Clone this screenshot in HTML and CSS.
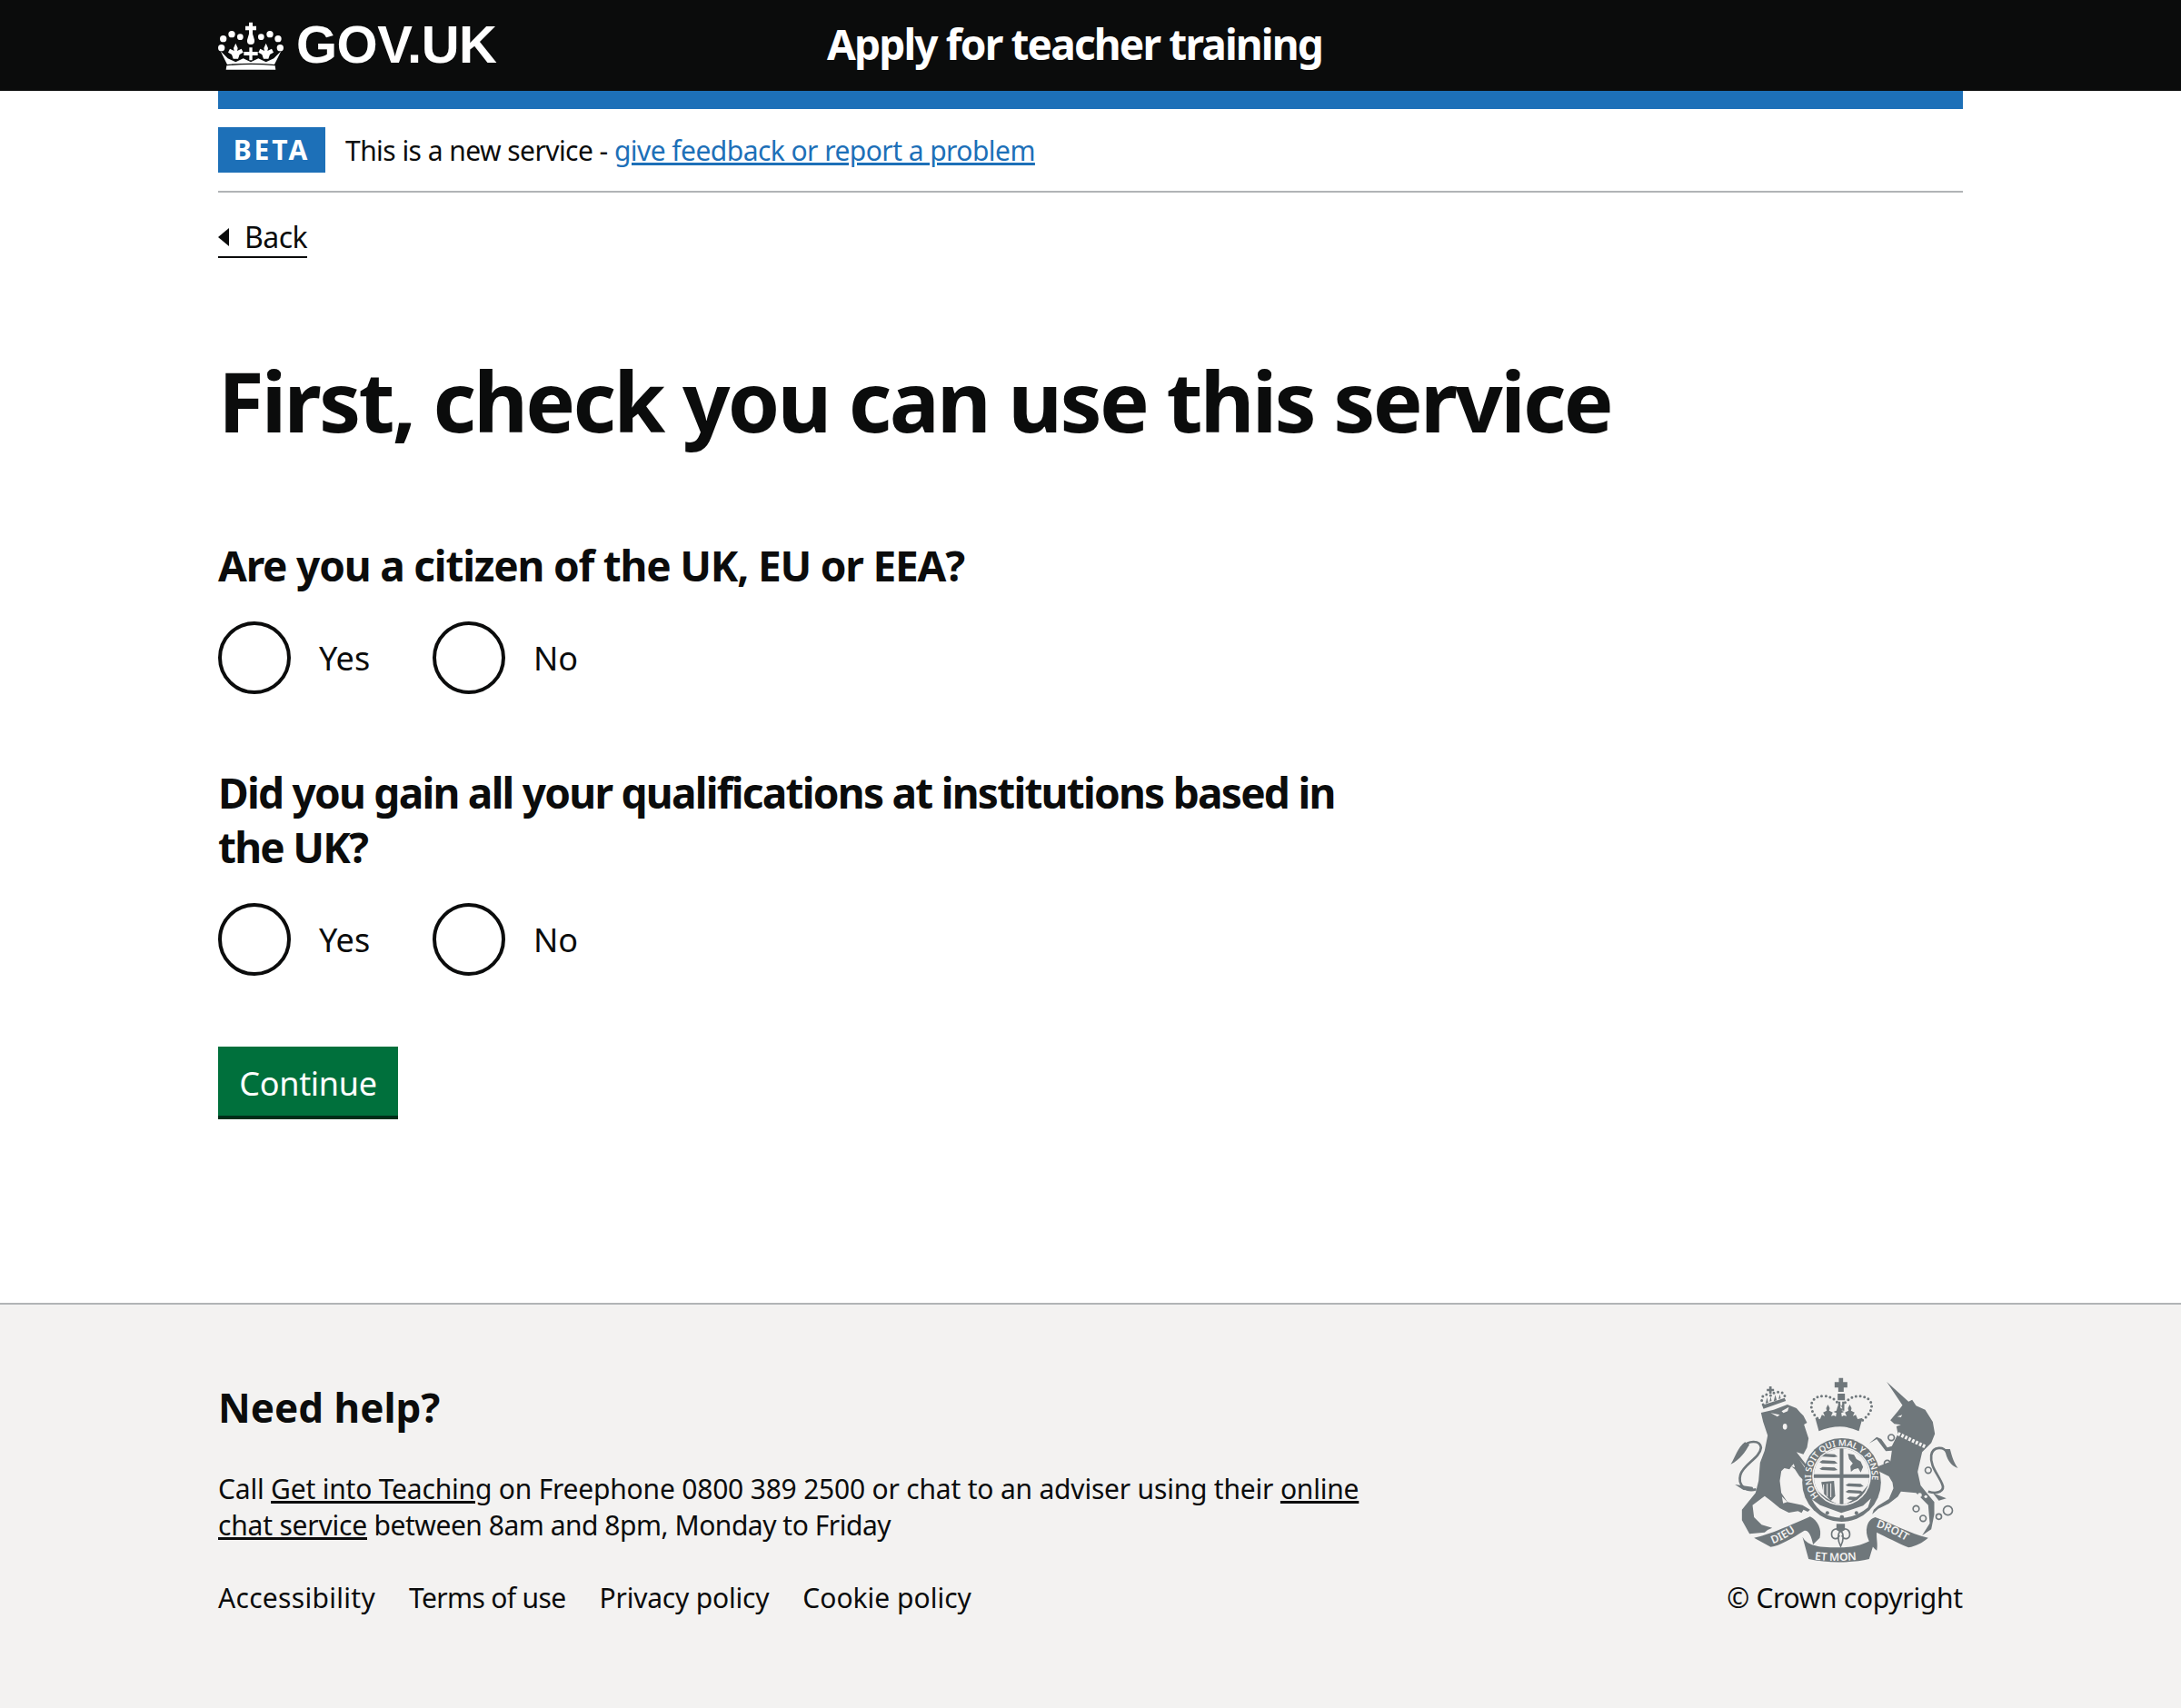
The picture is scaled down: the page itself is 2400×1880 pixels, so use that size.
FILE: index.html
```html
<!DOCTYPE html>
<html lang="en">

<head>
    <meta charset="UTF-8">
    <meta name="viewport" content="width=device-width, initial-scale=1.0">
    <title>Apply for teacher training</title>
    <link rel="stylesheet" href="styles.css">
</head>

<body>
    <header class="header">
        <div class="wrap header-inner">
            <a class="logo" href="#">
                <svg class="crown" viewBox="120 60 216 162" aria-hidden="true">
                    <g fill="#fff">
                        <path d="M222 65h12v12h12v14h-12v12l6 20q2 15-12 15t-12-15l6-20V91h-12V77h12z"/>
                        <circle cx="165" cy="104" r="11"/><circle cx="137" cy="119" r="11"/><circle cx="131" cy="149" r="11"/>
                        <circle cx="193" cy="113" r="10"/><circle cx="262" cy="113" r="10"/>
                        <circle cx="291" cy="104" r="11"/><circle cx="318" cy="119" r="11"/><circle cx="325" cy="149" r="11"/>
                        <path d="M128 160L150 204Q228 196 306 204L328 160 304 184 278 196 253 184 228 196 203 184 178 196 152 184Z"/>
                        <path d="M148 208Q228 200 308 208L310 221H146Z"/>
                        <path d="M178 134l7 16-2 9 14-7 6 12-12 7-5 14h-16l-5-14-12-7 6-12 14 7-2-9zM278 134l7 16-2 9 14-7 6 12-12 7-5 14h-16l-5-14-12-7 6-12 14 7-2-9z"/>
                        <path d="M223 148h10v14h18v12h-18v16h-10v-16h-18v-12h18z"/>
                    </g>
                </svg>
                <span class="logo-text">GOV.UK</span>
            </a>
            <a class="service-name" href="#">Apply for teacher training</a>
        </div>
    </header>

    <div class="wrap">
        <div class="blue-bar"></div>
        <div class="phase">
            <strong class="tag">BETA</strong>
            <span>This is a new service - <a class="link-blue" href="#">give feedback or report a problem</a></span>
        </div>
        <a class="back" href="#"><span class="back-arrow"></span>Back</a>

        <main class="main">
            <h1 class="title">First, check you can use this service</h1>
            <form>
                <fieldset class="question">
                    <legend class="q-label q-short">Are you a citizen of the UK, EU or EEA?</legend>
                    <div class="radios">
                        <label class="radio"><span class="radio-circle"></span><span class="radio-yes">Yes</span></label>
                        <label class="radio"><span class="radio-circle"></span>No</label>
                    </div>
                </fieldset>
                <fieldset class="question">
                    <legend class="q-label">Did you gain all your qualifications at institutions based in the UK?</legend>
                    <div class="radios">
                        <label class="radio"><span class="radio-circle"></span><span class="radio-yes">Yes</span></label>
                        <label class="radio"><span class="radio-circle"></span>No</label>
                    </div>
                </fieldset>
                <button class="button" type="button">Continue</button>
            </form>
        </main>
    </div>

    <footer class="footer">
        <div class="wrap footer-inner">
            <div class="footer-left">
                <h2 class="footer-title">Need help?</h2>
                <p class="footer-text">Call <a href="#">Get into Teaching</a> on Freephone 0800 389 2500 or chat to an adviser using their <a href="#">online</a> <a href="#">chat service</a> <span class="footer-tight">between 8am and 8pm, Monday to Friday</span></p>
                <ul class="footer-links">
                    <li><a href="#">Accessibility</a></li>
                    <li><a href="#">Terms of use</a></li>
                    <li><a href="#">Privacy policy</a></li>
                    <li><a href="#">Cookie policy</a></li>
                </ul>
            </div>
            <div class="footer-right">
                <svg class="arms" viewBox="60 75 770 630" aria-hidden="true">
                    <defs>
                        <path id="garter" d="M364 471A100 100 0 1 1 509 476"/>
                        <path id="scroll-l" d="M212 628Q270 606 318 562"/>
                        <path id="scroll-m" d="M350 680Q435 690 526 676"/>
                        <path id="scroll-r" d="M552 572Q612 592 672 632"/>
                        <clipPath id="shield-clip"><circle cx="439" cy="405" r="92"/></clipPath>
                    </defs>
                    <g class="arms-fill">
                        <g transform="translate(45 60)">
                            <!-- lion -->
                            <path d="M128 135L170 125 215 108 245 120 258 135 268 145 280 168 270 174 285 220 280 250 268 272 245 265 300 335 305 375 280 370 255 345 240 322 228 312 222 322 205 318 195 328 190 360 195 400 215 430 265 440 290 455 282 462 268 455 262 466 250 460 220 465 190 450 160 425 140 410 100 440 105 480 130 505 165 515 150 522 140 530 90 535 65 490 65 455 110 400 120 360 125 300 140 260 150 210 135 165Z"/>
                            <path class="arms-line" d="M112 388C80 398 50 375 60 340 70 305 125 285 128 250 125 225 85 225 72 248"/>
                            <path d="M28 305C45 280 50 250 75 232L90 240C75 265 60 290 28 305ZM42 372L100 380 105 392 70 390Z"/>
                            <path class="arms-light" d="M160 136l30 6-8 6zM196 130l24-14-4 14-14 6zM255 290l44 56-5 2zM228 312l8-8 4 12zM215 430l-18-18 4 22z"/>
                            <ellipse class="arms-light" cx="207" cy="181" rx="7" ry="10"/>
                            <!-- lion crown -->
                            <path d="M155 48h8v8h8v8h-8v8h-8v-8h-8v-8h8zM132 110l74-24 4 10-74 26z"/>
                            <path class="arms-dots" d="M135 108C120 80 145 68 160 78 170 62 212 60 206 88"/>
                            <path d="M148 84l4 18-9 2zM175 76l5 18-10 3zM160 82l3 14-7 2zM190 74l3 14-7 2z"/>
                        </g>
                        <g transform="translate(435 60)">
                            <!-- unicorn -->
                            <path d="M153 33L225 98 237 92 250 112 280 125 305 165 312 205 300 235 270 265 255 330 265 375 285 400 310 430 310 470 300 520 270 540 295 500 290 440 250 400 200 395 190 412 160 435 125 452 105 470 110 455 125 442 160 420 175 385 172 365 160 345 130 330 110 300 125 312 165 296 170 260 150 262 120 222 95 236 120 215 135 222 155 250 170 245 190 205 185 180 200 175 178 172 165 160 190 130 205 110Z"/>
                            <path class="arms-line" d="M290 395C320 405 348 395 335 368 322 338 295 310 300 275 305 245 345 245 352 268"/>
                            <path d="M388 318C365 310 350 290 345 255L362 255C370 285 375 300 388 318ZM305 400L350 418 325 425Z"/>
                            <path class="arms-collar" d="M190 204L282 248"/>
                            <path class="arms-light" d="M188 148l16-6-4 8z"/>
                            <g class="arms-ring">
                                <circle cx="168" cy="217" r="10"/><circle cx="155" cy="302" r="10"/><circle cx="290" cy="325" r="10"/>
                                <circle cx="250" cy="452" r="10"/><circle cx="273" cy="484" r="10"/><circle cx="325" cy="478" r="9"/><circle cx="355" cy="458" r="15"/>
                            </g>
                            <circle class="arms-light" cx="282" cy="372" r="7"/><circle class="arms-light" cx="262" cy="407" r="7"/><circle class="arms-light" cx="282" cy="412" r="5"/>
                        </g>
                        <!-- big crown -->
                        <path d="M430 80h14v14h14v18h-12v14h-18v-14h-12V94h14z"/>
                        <path d="M426 132h24v22h-24zM428 158h7v30h-7zM441 158h7v30h-7z"/>
                        <path class="arms-dots" d="M370 222C325 190 330 140 380 140 410 140 430 160 437 185 446 160 470 138 500 140 550 145 550 190 505 222"/>
                        <path d="M352 212l16 4 6-14 10 4-6-12 12-6-2-8 6-12 6 12-2 8 12 6-6 12 10-2 6 4 2-12-10-4 10-4 4-14h8l4 14 10 4-10 4 2 12 6-4 10 2-6-12 12-6-2-8 6-12 6 12-2 8 12 6-6 12 10-4 6 14 16-4-12 44Q438 226 364 256Z"/>
                        <path class="arms-light" d="M362 262Q438 232 510 262L500 284Q438 262 376 284Z"/>
                        <!-- garter -->
                        <circle cx="439" cy="405" r="126"/>
                        <circle cx="439" cy="425" r="130"/>
                        <circle class="arms-light" cx="439" cy="405" r="97"/>
                        <path class="arms-light" d="M340 480l28 20 70 26 72-24 26-24-10 30q-40 34-88 34-66 0-98-62z"/>
                        <circle cx="392" cy="526" r="6"/><circle cx="440" cy="540" r="7"/><circle cx="488" cy="526" r="6"/>
                        <!-- shield -->
                        <g clip-path="url(#shield-clip)">
                            <path d="M340 310H540V420C526 470 480 508 439 512 398 508 354 470 340 420Z"/>
                            <path class="arms-light" d="M340 300H433V398H340ZM445 300H540V398H445ZM340 410H433V500Q380 480 340 430ZM445 410H540L530 430Q490 482 445 500Z"/>
                            <path d="M366 336l10-6 40 2 10 8-12 2-40-2zM366 358l10-6 40 2 10 8-12 2-40-2zM366 380l10-6 40 2 10 8-12 2-40-2z"/>
                            <path d="M452 434l10-6 40 2 10 8-12 2-40-2zM452 456l10-6 40 2 10 8-12 2-40-2zM456 478l10-6 30 2 10 8-12 2-30-2z"/>
                            <path d="M460 330l20 4 8 14 14 8 8 18-8 18-8-14-14 4-10 8-2-18 8-10-12-14z"/>
                            <path d="M372 424l42-4 4 50-14 16-24-24z"/>
                            <path class="arms-light" d="M378 432h3v32h-3zM390 430h3v42h-3zM402 428h3v46h-3z"/>
                        </g>
                        <!-- motto scrolls -->
                        <g transform="translate(45 60)">
                            <path d="M105 548C150 540 230 505 290 478 315 490 330 520 322 548L300 570C295 545 285 520 270 525 230 550 190 575 160 578Z"/>
                        </g>
                        <path d="M310 605C325 630 350 640 430 640 490 640 525 625 552 605L530 678C470 692 390 692 330 678Z"/>
                        <g transform="translate(435 60)">
                            <path d="M115 480C170 500 230 535 290 548 270 565 250 575 225 580 190 565 150 545 120 530 118 550 125 570 120 590 100 575 80 540 88 510 92 495 100 485 115 480Z"/>
                        </g>
                        <!-- fleur under shield -->
                        <path class="arms-ring" d="M436 588c-12-18-30-6-30 8 0 16 20 22 26 4M436 588c12-18 30-6 30 8 0 16-20 22-26 4M436 582c-12 16-10 34 0 54 10-20 12-38 0-54Z"/>
                        <path d="M422 562h28v20l-14 8-14-8z"/>
                    </g>
                    <g class="arms-text">
                        <text class="arms-garter"><textPath href="#garter">HONI SOIT QUI MAL Y PENSE</textPath></text>
                        <text class="arms-motto"><textPath href="#scroll-l">DIEU</textPath></text>
                        <text class="arms-motto"><textPath href="#scroll-m">ET MON</textPath></text>
                        <text class="arms-motto"><textPath href="#scroll-r">DROIT</textPath></text>
                    </g>
                </svg>
                <p class="copyright">© Crown copyright</p>
            </div>
        </div>
    </footer>
</body>

</html>
```

FILE: styles.css
```css
* {
    margin: 0;
    padding: 0;
    box-sizing: border-box;
}

body {
    font-family: "Noto Sans", "Open Sans", sans-serif;
    color: #0b0c0c;
    background: #fff;
    min-height: 1880px;
    display: flex;
    flex-direction: column;
}

a {
    color: inherit;
}

.wrap {
    width: 1920px;
    margin: 0 auto;
}

/* header */
.header {
    background: #0b0c0c;
    height: 100px;
    color: #fff;
}

.header-inner {
    display: flex;
    align-items: center;
    height: 100px;
}

.logo {
    width: 670px;
    display: flex;
    align-items: center;
    text-decoration: none;
}

.crown {
    width: 72px;
    height: 54px;
    margin-right: 14px;
}

.logo-text {
    font-family: "Liberation Sans", sans-serif;
    font-weight: 700;
    font-size: 58px;
    line-height: 60px;
    letter-spacing: -0.5px;
    margin-top: -2px;
}

.service-name {
    font-weight: 700;
    font-size: 46px;
    line-height: 60px;
    text-decoration: none;
    letter-spacing: -1.85px;
    margin-top: -5px;
}

.blue-bar {
    height: 20px;
    background: #1d70b8;
}

/* phase banner */
.phase {
    display: flex;
    align-items: center;
    height: 92px;
    border-bottom: 2px solid #b1b4b6;
    font-size: 30px;
    letter-spacing: -0.55px;
}

.tag {
    background: #1d70b8;
    color: #fff;
    width: 118px;
    height: 50px;
    line-height: 50px;
    text-align: center;
    font-size: 30px;
    letter-spacing: 3px;
    margin-right: 22px;
}

.link-blue {
    color: #1d70b8;
}

.back {
    display: inline-flex;
    align-items: center;
    margin-top: 28px;
    font-size: 32px;
    line-height: 40px;
    letter-spacing: -0.5px;
    text-decoration: none;
    border-bottom: 2px solid #0b0c0c;
    height: 44px;
}

.back-arrow {
    width: 0;
    height: 0;
    border-style: solid;
    border-width: 10px 12px 10px 0;
    border-color: transparent #0b0c0c transparent transparent;
    margin-right: 17px;
}

/* main form */
.main {
    padding-top: 107px;
}

.title {
    font-size: 92px;
    line-height: 100px;
    font-weight: 700;
    letter-spacing: -2.7px;
    margin-bottom: 101px;
}

.question {
    border: 0;
    width: 1280px;
    margin-bottom: 78px;
}

.q-label {
    font-size: 46px;
    line-height: 60px;
    font-weight: 700;
    letter-spacing: -1.75px;
    margin-bottom: 32px;
}

.q-short {
    letter-spacing: -1.2px;
}

.radios {
    display: flex;
    gap: 57px;
}

.radio {
    display: flex;
    align-items: center;
    height: 80px;
    font-size: 36px;
}

.radio-circle {
    width: 80px;
    height: 80px;
    border: 4px solid #0b0c0c;
    border-radius: 50%;
    margin-right: 31px;
}

.radio-yes {
    width: 68px;
}

.button {
    display: block;
    width: 198px;
    height: 80px;
    margin-top: 6px;
    background: #00703c;
    color: #fff;
    border: 0;
    box-shadow: inset 0 -4px 0 #002d18;
    font-family: inherit;
    font-size: 36px;
    letter-spacing: -0.3px;
}

/* footer */
.footer {
    margin-top: auto;
    height: 446px;
    background: #f3f2f1;
    border-top: 2px solid #b1b4b6;
}

.footer-inner {
    display: flex;
    justify-content: space-between;
    padding-top: 83px;
}

.footer-left {
    width: 1280px;
}

.footer-title {
    font-size: 44px;
    line-height: 60px;
    font-weight: 700;
    margin-bottom: 40px;
}

.footer-text {
    font-size: 30px;
    line-height: 40px;
    letter-spacing: -0.2px;
    margin-bottom: 40px;
}

.footer-tight {
    letter-spacing: -0.48px;
}

.footer-links {
    display: flex;
    gap: 37px;
    list-style: none;
    font-size: 30px;
    line-height: 40px;
}

.footer-links li:nth-child(1) {
    letter-spacing: 0.3px;
}

.footer-links li:nth-child(2) {
    letter-spacing: -0.65px;
}

.footer-links li:nth-child(3) {
    letter-spacing: -0.2px;
}

.footer-links a {
    text-decoration: none;
}

.footer-right {
    display: flex;
    flex-direction: column;
    align-items: center;
    font-size: 30px;
    line-height: 40px;
    letter-spacing: -0.3px;
}

.arms {
    width: 257px;
    height: 210px;
    margin-top: -4px;
    margin-bottom: 14px;
    margin-right: 3px;
}

.arms-fill {
    fill: #6f777b;
}

.arms-light {
    fill: #f3f2f1;
}

.arms-line {
    fill: none;
    stroke: #6f777b;
    stroke-width: 8;
}

.arms-dots {
    fill: none;
    stroke: #6f777b;
    stroke-width: 9;
    stroke-linecap: round;
    stroke-dasharray: 0 14;
}

.arms-ring {
    fill: none;
    stroke: #6f777b;
    stroke-width: 5;
}

.arms-collar {
    fill: none;
    stroke: #f3f2f1;
    stroke-width: 12;
    stroke-dasharray: 8 5;
}

.arms-text {
    fill: #f3f2f1;
    font-weight: 600;
}

.arms-garter {
    font-size: 29px;
}

.arms-motto {
    font-size: 36px;
}
```
